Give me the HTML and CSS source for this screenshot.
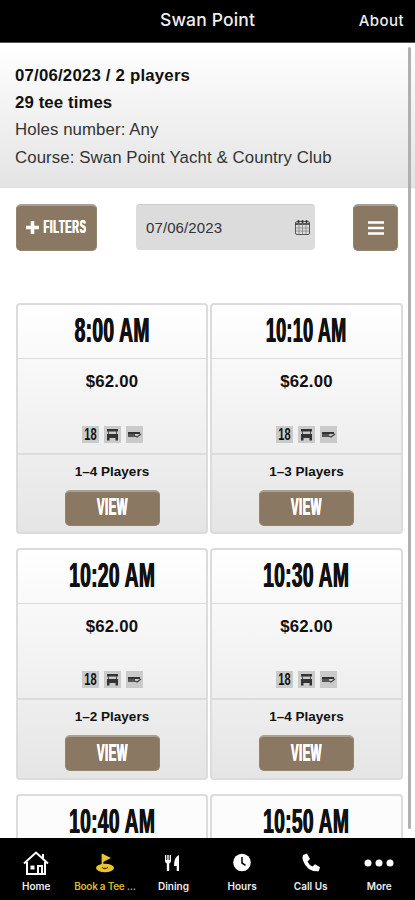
FILE: index.html
```html
<!DOCTYPE html>
<html lang="en">
<head>
<meta charset="utf-8">
<title>Swan Point</title>
<link rel="stylesheet" href="styles.css">
</head>
<body>
<svg class="defs" aria-hidden="true">
  <symbol id="cart" viewBox="0 0 17 17"><path d="M3 3h11v2.500H3zM3 8h11v4H3zM3 11h2.500v3.500H3zM11.500 11h2.500v3.500h-2.500z" fill="#333"/><path d="M4.500 5v3M12.500 5v3" stroke="#555"/></symbol>
  <symbol id="card" viewBox="0 0 17 17"><path d="M2 6h12v2H2z" fill="#333"/><path d="M2 8h7v3H2z" fill="#555"/><path d="M9 10l2 1 4-3" fill="none" stroke="#444" stroke-width="1.300"/></symbol>
</svg>
<header class="top"><span></span><h1>Swan Point</h1><a>About</a></header>
<main>
  <section class="summary">
    <p><b>07/06/2023 / 2 players</b></p>
    <p><b>29 tee times</b></p>
    <p>Holes number: Any</p>
    <p>Course: Swan Point Yacht &amp; Country Club</p>
  </section>
  <section class="controls">
    <button class="btn filters"><svg width="13" height="13" viewBox="0 0 13 13"><path d="M6.500 0v13M0 6.500h13" stroke="#fff" stroke-width="3.600"/></svg><span class="filters-box"><span class="cond">FILTERS</span></span></button>
    <div class="date"><span>07/06/2023</span><svg width="15" height="16" viewBox="0 0 15 16" fill="none" stroke="#555"><rect x=".5" y="2.500" width="14" height="13" rx="1.500"/><path d="M.5 5h14" stroke="#333" stroke-width="1.500"/><path d="M4 6v9M7.500 6v9M11 6v9M1 9h13M1 12h13" stroke="#888" stroke-width=".8"/><path d="M3.500 1v3M7.500 1v3M11.500 1v3" stroke="#333" stroke-width="1.500"/></svg></div>
    <button class="btn menu"><svg width="16" height="14" viewBox="0 0 16 14"><path d="M0 1.500h16M0 7h16M0 12.500h16" stroke="#fff" stroke-width="2.600"/></svg></button>
  </section>
  <section class="grid">
    <article class="slot"><h2><span class="cond">8:00 AM</span></h2><div class="mid"><b>$62.00</b><div class="icons"><i><span class="cond">18</span></i><i><svg><use href="#cart"/></svg></i><i><svg><use href="#card"/></svg></i></div></div><div class="foot"><b>1–4 Players</b><button class="btn view"><span class="cond">VIEW</span></button></div></article>
    <article class="slot"><h2><span class="cond ones">10:10 AM</span></h2><div class="mid"><b>$62.00</b><div class="icons"><i><span class="cond">18</span></i><i><svg><use href="#cart"/></svg></i><i><svg><use href="#card"/></svg></i></div></div><div class="foot"><b>1–3 Players</b><button class="btn view"><span class="cond">VIEW</span></button></div></article>
    <article class="slot"><h2><span class="cond">10:20 AM</span></h2><div class="mid"><b>$62.00</b><div class="icons"><i><span class="cond">18</span></i><i><svg><use href="#cart"/></svg></i><i><svg><use href="#card"/></svg></i></div></div><div class="foot"><b>1–2 Players</b><button class="btn view"><span class="cond">VIEW</span></button></div></article>
    <article class="slot"><h2><span class="cond">10:30 AM</span></h2><div class="mid"><b>$62.00</b><div class="icons"><i><span class="cond">18</span></i><i><svg><use href="#cart"/></svg></i><i><svg><use href="#card"/></svg></i></div></div><div class="foot"><b>1–4 Players</b><button class="btn view"><span class="cond">VIEW</span></button></div></article>
    <article class="slot short"><h2><span class="cond">10:40 AM</span></h2></article>
    <article class="slot short"><h2><span class="cond">10:50 AM</span></h2></article>
  </section>
  <div class="scrollbar"></div>
</main>
<nav class="tabs">
  <a><svg width="26" height="26" viewBox="0 0 26 26" fill="none" stroke="#fff" stroke-width="2"><path d="M1 13.500L13 2.500l12 11M20 8V4M4 12v12h18V12"/><path d="M15 24v-8h4v8" stroke-width="2"/><path d="M7.500 15.500h4v4h-4z" fill="#fff" stroke="none"/></svg><span>Home</span></a>
  <a class="active"><svg width="26" height="26" viewBox="0 0 26 26"><ellipse cx="13" cy="18" rx="9" ry="4.200" fill="#e6c52f"/><path d="M10.500 18V4" stroke="#e6c52f" stroke-width="1.800"/><path d="M10 3.500l9 4.500-8 4z" fill="#e6c52f"/><path d="M10 17.500q2.500 2 6 0" fill="none" stroke="#4b400b" stroke-width="1.300"/></svg><span>Book a Tee ...</span></a>
  <a><svg width="26" height="26" viewBox="0 0 26 26" fill="#fff"><path d="M5 5h1.300v5h1V5h1.400v5h1V5H11v6q0 1.700-1.800 2.500V21H6.800v-7.500Q5 12.700 5 11zM19 5v16h-2.300v-5H14q0-9 5-11z"/></svg><span>Dining</span></a>
  <a><svg width="26" height="26" viewBox="0 0 26 26"><circle cx="13" cy="12.500" r="8.800" fill="#fff"/><path d="M13 7v6l3.500 2.300" fill="none" stroke="#000" stroke-width="1.500"/></svg><span>Hours</span></a>
  <a><svg width="26" height="26" viewBox="0 0 26 26" fill="#fff"><path d="M5 5l4-1.500 3 5.500-2.500 2.500q1.500 3.500 5 5l2.500-2.300 5 3-1.300 4Q9 22 5 10.500 4 7.500 5 5z"/></svg><span>Call Us</span></a>
  <a><svg width="32" height="26" viewBox="0 0 32 26" fill="#fff"><circle cx="5" cy="13" r="3.500"/><circle cx="16" cy="13" r="3.500"/><circle cx="27" cy="13" r="3.500"/></svg><span>More</span></a>
</nav>
</body>
</html>
```
FILE: styles.css
```css
* { box-sizing: border-box; }
body { margin: 0; height: 900px; display: flex; flex-direction: column; overflow: hidden; background: #fff; color: #111; font-family: "Liberation Sans", sans-serif; }
h1, h2, p { margin: 0; }
.defs { position: absolute; width: 0; height: 0; }
.top { flex: 0 0 43px; display: grid; grid-template-columns: 1fr auto 1fr; align-items: center; background: #000; border-bottom: 1px solid #555; color: #eee; padding: 0 11px 3px 11px; font-family: Inter, sans-serif; }
.top h1 { font-size: 17.500px; font-weight: 500; letter-spacing: .15px; }
.top a { justify-self: end; font-size: 15px; font-weight: 500; letter-spacing: .45px; padding-top: 2px; }
main { flex: 1; min-height: 0; overflow: hidden; position: relative; }
.summary { height: 145px; padding: 19px 15px 0; background: linear-gradient(#fff, #e4e4e4); border-bottom: 1px solid #e0e0e0; }
.summary p { font-size: 16.800px; line-height: 27.200px; letter-spacing: .1px; color: #333; white-space: nowrap; }
.summary b { color: #111; letter-spacing: .2px; }
.summary p:nth-child(2) b { letter-spacing: .1px; }
.controls { display: flex; align-items: flex-start; padding: 16px 17px 0 16px; height: 114.500px; }
.btn { display: flex; align-items: center; justify-content: center; padding: 0; border: 1px solid #93856f; border-top: 2px solid #aaa091; border-radius: 5px; background: #8b7863; color: #fff; font-family: inherit; }
.filters { width: 81px; height: 47px; gap: 5px; padding-bottom: 2px; }
.cond { display: inline-block; white-space: nowrap; transform: scaleX(.55); text-shadow: .7px 0 currentColor, -.7px 0 currentColor; font-family: "Liberation Sans", sans-serif; font-weight: 700; }
.filters-box { width: 43px; display: flex; justify-content: center; }
.filters .cond { font-size: 18px; transform: scaleX(.51); letter-spacing: 1.500px; text-shadow: .5px 0 currentColor, -.5px 0 currentColor; }
.date { width: 179px; height: 46px; margin-left: 39px; padding: 0 5px 1px 10px; display: flex; justify-content: space-between; align-items: center; border-radius: 4px; background: #dcdcdc; border-top: 1px solid #ccc; font-size: 15px; letter-spacing: .1px; color: #333; }
.menu { width: 45px; height: 47px; margin-left: auto; padding-bottom: 1px; }
.grid { display: grid; grid-template-columns: 192px 193px; gap: 14px 2px; margin-left: 16px; }
.slot { height: 231.500px; border: 2px solid #dcdcdc; border-radius: 4px; background: linear-gradient(#fff, #e5e5e5); }
.slot.short { height: 60px; background: #fcfcfc; }
.slot h2 { height: 53px; display: flex; justify-content: center; align-items: flex-start; font-size: 35px; line-height: 40px; padding-top: 5px; }
.slot h2 .cond { letter-spacing: .5px; }
.slot h2 .ones { transform: scaleX(.515); }
.mid { height: 97px; margin: 0 -2px; border: 1px solid #dcdcdc; border-width: 1px 2px 2px; display: flex; flex-direction: column; align-items: center; padding-top: 13px; }
.mid b { font-size: 16.800px; line-height: 20px; letter-spacing: .2px; }
.icons { display: flex; gap: 5px; margin-top: 34px; }
.icons i { width: 17px; height: 17px; background: #cacaca; display: flex; justify-content: center; align-items: center; font-style: normal; }
.icons svg { width: 17px; height: 17px; }
.icons .cond { font-size: 17px; line-height: 17px; transform: scaleX(.65); text-shadow: none; }
.foot { display: flex; flex-direction: column; align-items: center; padding-top: 9px; }
.foot b { font-size: 13.500px; line-height: 16px; letter-spacing: 0; }
.view { width: 95px; height: 36px; margin-top: 10px; padding-bottom: 2px; }
.view .cond { font-size: 23px; line-height: 26px; transform: scaleX(.49); letter-spacing: 1px; text-shadow: .5px 0 currentColor, -.5px 0 currentColor; }
.scrollbar { position: absolute; left: 408px; top: 4px; width: 3px; height: 782px; border-radius: 2px; background: #b0b0b0; }
.tabs { flex: 0 0 62px; background: #000; color: #eee; display: grid; grid-template-columns: repeat(6, 68.600px); padding-left: 2px; font-family: Inter, sans-serif; }
.tabs a { display: flex; flex-direction: column; align-items: center; padding-top: 12px; }
.tabs span { margin-top: 4px; font-size: 10px; line-height: 13px; font-weight: 600; white-space: nowrap; letter-spacing: 0; }
.tabs .active { color: #d8b92f; }
.tabs .active span { letter-spacing: -.25px; }
```
